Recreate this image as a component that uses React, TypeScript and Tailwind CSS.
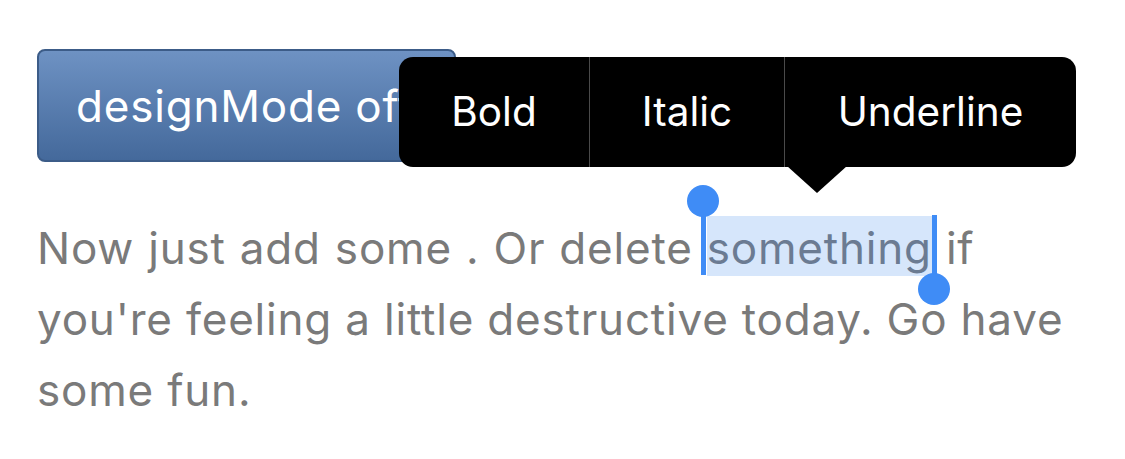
import React from 'react';

const font = { fontFamily: 'Inter, "Noto Sans", sans-serif' };

const Handle: React.FC<{ side: 'start' | 'end' }> = ({ side }) =>
  side === 'start' ? (
    <span className="absolute left-[-6px] top-[-4px] bottom-[1px] w-[5px] bg-[#3f8cf6]">
      <span className="absolute left-[-14px] top-[-27px] w-[32px] h-[32px] rounded-full bg-[#3f8cf6]" />
    </span>
  ) : (
    <span className="absolute right-[-5px] top-[-1px] bottom-[-13px] w-[5px] bg-[#3f8cf6]">
      <span className="absolute left-[-14px] bottom-[-16px] w-[32px] h-[32px] rounded-full bg-[#3f8cf6]" />
    </span>
  );

const EditMenu: React.FC = () => (
  <div className="absolute left-[399px] top-[57px] w-[677px] h-[110px] rounded-[14px] bg-black flex text-white text-[40.5px]" style={font}>
    <div className="w-[191px] flex items-center justify-center border-r border-[#4a4a4a]">Bold</div>
    <div className="w-[195px] flex items-center justify-center border-r border-[#4a4a4a]">Italic</div>
    <div className="flex-1 flex items-center justify-center">Underline</div>
    <svg className="absolute left-[388px] top-[109px]" width="60" height="27" viewBox="0 0 60 27">
      <polygon points="0,0 60,0 30,27" fill="#000" />
    </svg>
  </div>
);

export default function App() {
  return (
    <div className="relative w-[1125px] h-[459px] bg-white overflow-hidden pl-[37px] pt-[49px]" style={font}>
      <button className="w-[419px] h-[113px] rounded-[8px] border-2 border-[#3c5c88] bg-gradient-to-b from-[#6e92c3] to-[#44699b] text-white text-[44px] tracking-[0.8px] text-left pl-[37px]">
        designMode off
      </button>

      <div className="mt-[51px] text-[44px] tracking-[0.8px] leading-[71px] text-[#7a7a7a]">
        <div className="[word-spacing:0.9px]">
          Now just add some . Or delete{' '}
          <span className="relative bg-[#d6e6fb] text-[#6b7b92] pt-[5px] pb-[1px] [word-spacing:0]">
            <Handle side="start" />
            something
            <Handle side="end" />
          </span>{' '}
          if
        </div>
        <div>you're feeling a little destructive today. Go have</div>
        <div>some fun.</div>
      </div>

      <EditMenu />
    </div>
  );
}
